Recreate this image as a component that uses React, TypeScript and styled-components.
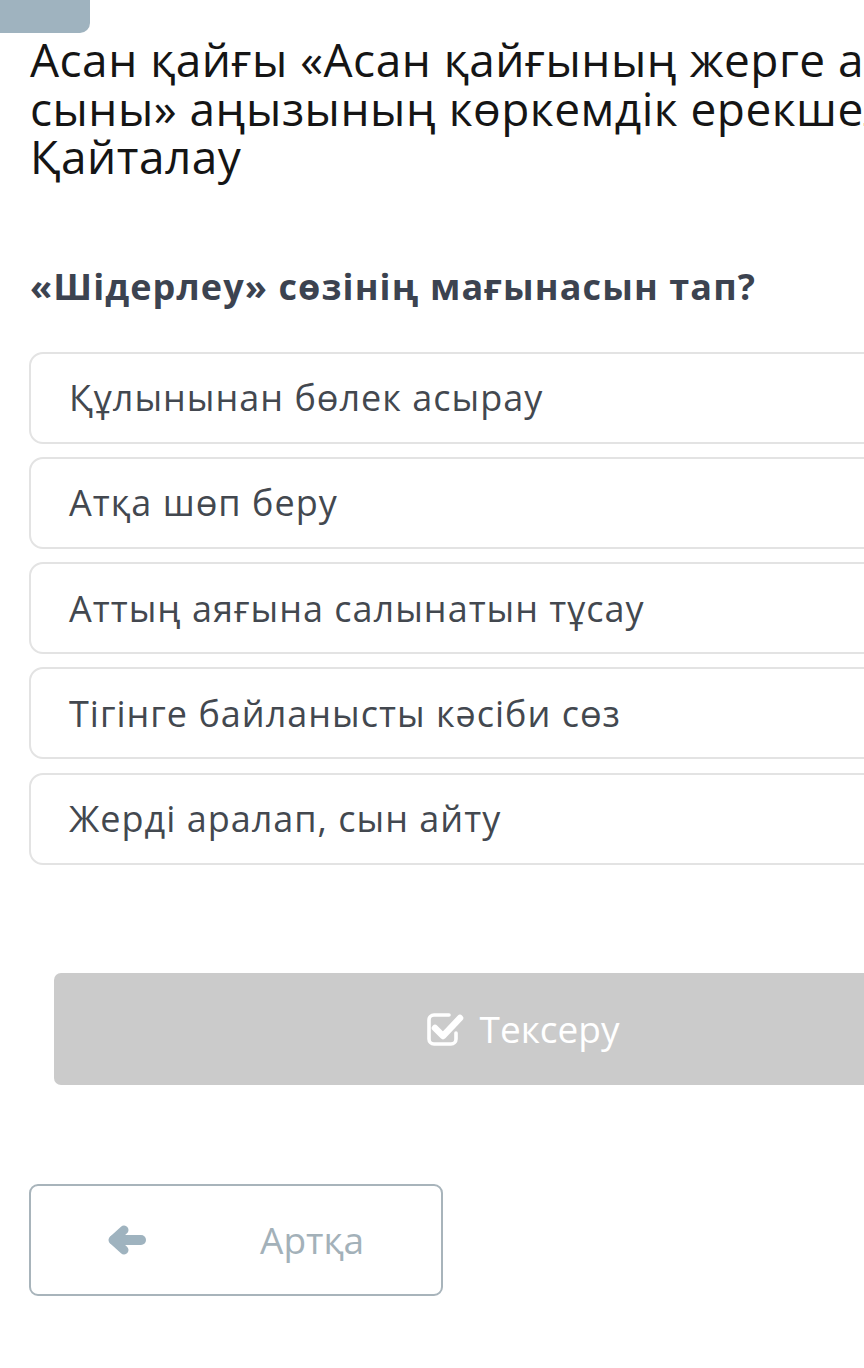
import React from "react";
import styled, { createGlobalStyle } from "styled-components";

const Global = createGlobalStyle`
  html, body { margin: 0; padding: 0; background: #fff; overflow: hidden; }
  body { font-family: "Open Sans", "Noto Sans", sans-serif; }
  * { box-sizing: border-box; }
`;

const Page = styled.div`
  width: 1044px;
`;

const Tab = styled.div`
  width: 90px;
  height: 33px;
  background: #9fb3bf;
  border-bottom-right-radius: 10px;
`;

const Content = styled.div`
  padding: 0 29px;
  display: flex;
  flex-direction: column;
`;

const Title = styled.h1`
  margin: 2px 0 0 1px;
  font-size: 46px;
  line-height: 48.5px;
  letter-spacing: 0.5px;
  font-weight: 400;
  color: #151515;
  white-space: nowrap;
`;

const Question = styled.h2`
  margin: 83px 0 0 1px;
  font-size: 36px;
  line-height: 46px;
  letter-spacing: 1.1px;
  font-weight: 700;
  color: #3c4350;
`;

const Options = styled.div`
  margin-top: 42px;
  display: flex;
  flex-direction: column;
  gap: 13.3px;
`;

const Option = styled.div`
  height: 92px;
  border: 2px solid #e3e3e3;
  border-radius: 14px;
  display: flex;
  align-items: center;
  padding-left: 38px;
  font-size: 36px;
  letter-spacing: 1px;
  color: #43484f;
`;

const CheckButton = styled.div`
  margin: 108px 25px 0;
  height: 112px;
  background: #cbcbcb;
  border-radius: 7px;
  display: flex;
  align-items: center;
  justify-content: center;
  gap: 15px;
  color: #fff;
  font-size: 37px;
`;

const BackButton = styled.div`
  margin-top: 99px;
  width: 414px;
  height: 112px;
  border: 2px solid #a8b4bb;
  border-radius: 9px;
  display: flex;
  align-items: center;
  gap: 114px;
  padding-left: 77px;
  color: #a3b1b9;
  font-size: 37px;
`;

const CheckIcon = () => (
  <svg width="40" height="36" viewBox="0 0 40 36" fill="none">
    <path
      d="M24 4 H9 a5 5 0 0 0 -5 5 V28 a5 5 0 0 0 5 5 H26 a5 5 0 0 0 5 -5 V22"
      stroke="#fff"
      strokeWidth="3.6"
      strokeLinecap="round"
    />
    <path
      d="M10 17 L18 25 L35 7"
      stroke="#fff"
      strokeWidth="6.5"
      strokeLinecap="round"
      strokeLinejoin="round"
    />
  </svg>
);

const ArrowIcon = () => (
  <svg width="38" height="30" viewBox="0 0 38 30" fill="none">
    <path
      d="M6 15 H33"
      stroke="#9fb3bf"
      strokeWidth="10"
      strokeLinecap="round"
    />
    <path
      d="M16 5 L5 15 L16 25"
      stroke="#9fb3bf"
      strokeWidth="9"
      strokeLinecap="round"
      strokeLinejoin="round"
    />
  </svg>
);

const options = [
  "Құлынынан бөлек асырау",
  "Атқа шөп беру",
  "Аттың аяғына салынатын тұсау",
  "Тігінге байланысты кәсіби сөз",
  "Жерді аралап, сын айту",
];

export default function App() {
  return (
    <>
      <Global />
      <Page>
        <Tab />
        <Content>
          <Title>
            Асан қайғы «Асан қайғының жерге айтқан
            <br />
            сыны» аңызының көркемдік ерекшелігі.
            <br />
            Қайталау
          </Title>
          <Question>«Шідерлеу» сөзінің мағынасын тап?</Question>
          <Options>
            {options.map((o) => (
              <Option key={o}>{o}</Option>
            ))}
          </Options>
          <CheckButton>
            <CheckIcon />
            <span>Тексеру</span>
          </CheckButton>
          <BackButton>
            <ArrowIcon />
            <span>Артқа</span>
          </BackButton>
        </Content>
      </Page>
    </>
  );
}
